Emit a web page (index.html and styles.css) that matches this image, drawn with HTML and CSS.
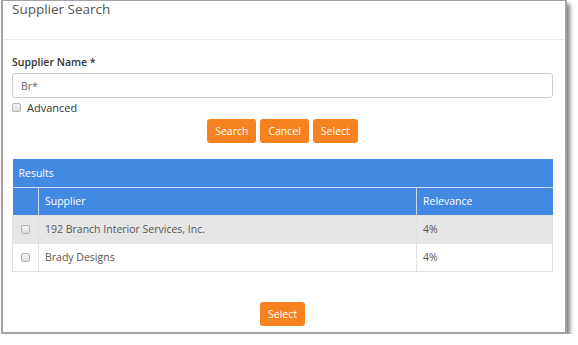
FILE: index.html
```html
<!DOCTYPE html>
<html lang="en">
<head>
<meta charset="UTF-8">
<title>Supplier Search</title>
<link rel="stylesheet" href="styles.css">
</head>
<body>
<div class="dialog">
<div class="dialog-header">Supplier Search</div>
<div class="dialog-body">
<form>
<div class="form-group">
<label for="supplierName" class="field-label">Supplier Name *</label>
<input type="text" id="supplierName" value="Br*">
<label class="check-label"><input type="checkbox"> Advanced</label>
</div>
<div class="btn-row">
<button type="button" class="btn">Search</button>
<button type="button" class="btn">Cancel</button>
<button type="button" class="btn">Select</button>
</div>
</form>
<table class="results">
<tr class="caption-row"><th colspan="3">Results</th></tr>
<tr class="head-row">
<th class="col-check"></th>
<th>Supplier</th>
<th class="col-rel">Relevance</th>
</tr>
<tr class="alt">
<td class="col-check"><input type="checkbox"></td>
<td>192 Branch Interior Services, Inc.</td>
<td class="col-rel">4%</td>
</tr>
<tr>
<td class="col-check"><input type="checkbox"></td>
<td>Brady Designs</td>
<td class="col-rel">4%</td>
</tr>
</table>
<div class="btn-row bottom">
<button type="button" class="btn">Select</button>
</div>
</div>
</div>
</body>
</html>
```
FILE: styles.css
```css
body {
font-family: 'Open Sans', sans-serif;
font-size: 10.5px;
color: #555;
background-color: #fff;
margin: 0;
padding: 0;
}
.dialog {
margin-left: 1px;
width: 562px;
height: 331px;
border: 2px solid #a3a3a3;
border-top-width: 1px;
box-shadow: 3px 4px 4px rgba(0, 0, 0, 0.5);
background-color: #fff;
}
.dialog-header {
height: 38px;
padding-left: 9px;
font-size: 13.5px;
line-height: 17px;
color: #555;
border-bottom: 1px solid #ececec;
}
.dialog-body {
padding: 14px 12px 0 9px;
}
.field-label {
display: block;
font-weight: 600;
color: #333;
line-height: 16px;
margin-bottom: 3px;
}
input[type="text"] {
display: block;
width: 100%;
height: 25px;
padding: 0 8px;
border: 1px solid #ccc;
border-radius: 3px;
box-sizing: border-box;
font-family: 'Open Sans', sans-serif;
font-size: 10.5px;
color: #666;
}
.check-label {
display: flex;
align-items: center;
margin-top: 2px;
height: 14px;
font-size: 11px;
color: #333;
}
input[type="checkbox"] {
-webkit-appearance: none;
appearance: none;
width: 9px;
height: 9px;
margin: 0 6px 0 0;
border: 1px solid #b3b3b3;
border-radius: 2px;
background: linear-gradient(#f4f4f4, #dedede);
box-sizing: border-box;
}
.btn-row {
display: flex;
justify-content: center;
gap: 4px;
margin-top: 5px;
}
.btn {
background-color: #f5821f;
color: #fff;
border: none;
border-radius: 3px;
height: 24px;
padding: 0 8px;
font-family: 'Open Sans', sans-serif;
font-size: 10.5px;
cursor: pointer;
}
.results {
width: 100%;
margin-top: 16px;
border-collapse: collapse;
}
.results th,
.results td {
height: 28px;
padding: 0 6px;
text-align: left;
font-weight: normal;
box-sizing: border-box;
}
.caption-row th {
background-color: #4189e3;
color: #fff;
border-bottom: 1px solid #c9d9ef;
}
.head-row th {
background-color: #4189e3;
color: #fff;
border-left: 1px solid #c9d9ef;
}
.head-row th:first-child {
border-left: none;
}
.results td {
border: 1px solid #e1e1e1;
color: #555;
}
.results tr.alt td {
background-color: #e6e6e6;
}
.col-check {
width: 26px;
}
.col-check input {
display: block;
margin: 0 auto;
}
.col-rel {
width: 136px;
}
.btn-row.bottom {
margin-top: 30px;
}
```
